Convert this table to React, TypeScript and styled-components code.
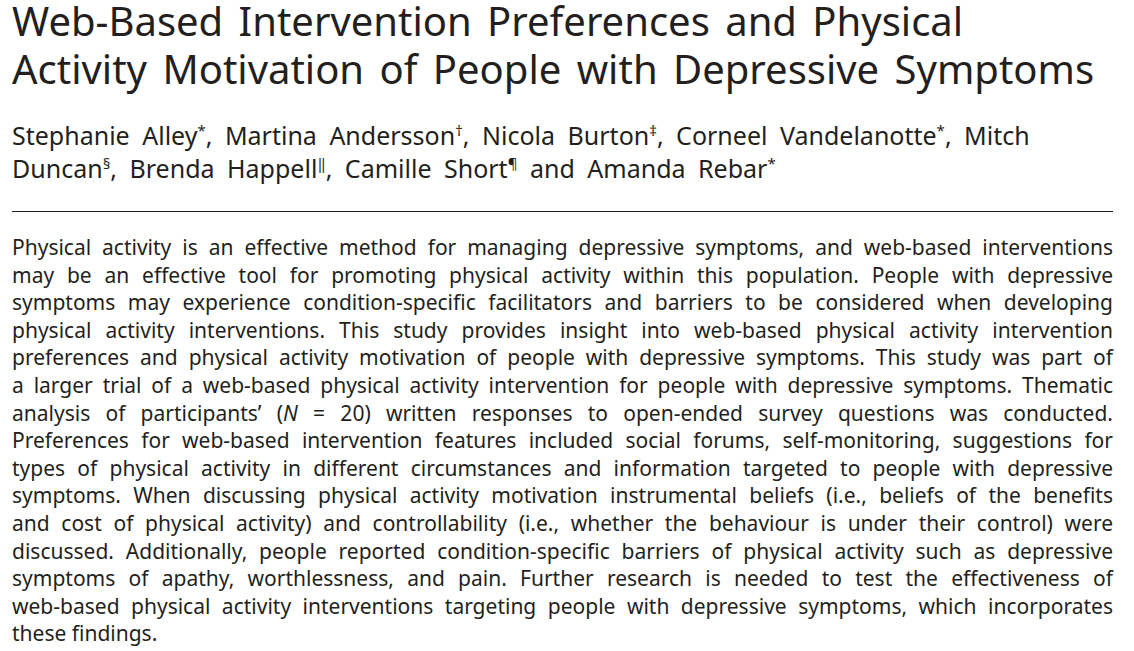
import React from 'react';
import styled, { createGlobalStyle } from 'styled-components';

const GlobalStyle = createGlobalStyle`
  html, body {
    margin: 0;
    padding: 0;
    background: #fff;
  }
  body {
    font-family: "Noto Sans", "Open Sans", sans-serif;
    color: #231f20;
  }
`;

const Page = styled.div`
  width: 1134px;
  padding: 0 21px 0 12px;
  box-sizing: border-box;
`;

const Title = styled.h1`
  margin: -3px 0 0;
  font-size: 40px;
  font-weight: 400;
  line-height: 48px;
  word-spacing: 5px;
  white-space: nowrap;
`;

const Authors = styled.p`
  margin: 26px 0 0;
  font-size: 25px;
  line-height: 33px;
  word-spacing: 6px;
  white-space: nowrap;
`;

const Mark = styled.sup`
  font-size: 15px;
  line-height: 0;
  vertical-align: 9px;
`;

const Rule = styled.hr`
  margin: 26px 0 0;
  border: 0;
  border-top: 1px solid #231f20;
`;

const Abstract = styled.div`
  margin-top: 22px;
  font-size: 21px;
  line-height: 27.6px;
`;

const Line = styled.span<{ $last?: boolean }>`
  display: block;
  text-align: justify;
  text-align-last: ${(p) => (p.$last ? 'left' : 'justify')};
  white-space: nowrap;
`;

const abstractLines: React.ReactNode[] = [
  'Physical activity is an effective method for managing depressive symptoms, and web-based interventions',
  'may be an effective tool for promoting physical activity within this population. People with depressive',
  'symptoms may experience condition-specific facilitators and barriers to be considered when developing',
  'physical activity interventions. This study provides insight into web-based physical activity intervention',
  'preferences and physical activity motivation of people with depressive symptoms. This study was part of',
  'a larger trial of a web-based physical activity intervention for people with depressive symptoms. Thematic',
  <>
    analysis of participants’ (<i>N</i> = 20) written responses to open-ended survey questions was conducted.
  </>,
  'Preferences for web-based intervention features included social forums, self-monitoring, suggestions for',
  'types of physical activity in different circumstances and information targeted to people with depressive',
  'symptoms. When discussing physical activity motivation instrumental beliefs (i.e., beliefs of the benefits',
  'and cost of physical activity) and controllability (i.e., whether the behaviour is under their control) were',
  'discussed. Additionally, people reported condition-specific barriers of physical activity such as depressive',
  'symptoms of apathy, worthlessness, and pain. Further research is needed to test the effectiveness of',
  'web-based physical activity interventions targeting people with depressive symptoms, which incorporates',
  'these findings.',
];

const App: React.FC = () => {
  return (
    <>
      <GlobalStyle />
      <Page>
        <Title>
          Web-Based Intervention Preferences and Physical
          <br />
          Activity Motivation of People with Depressive Symptoms
        </Title>
        <Authors>
          Stephanie Alley<Mark>*</Mark>, Martina Andersson<Mark>†</Mark>, Nicola Burton<Mark>‡</Mark>, Corneel
          Vandelanotte<Mark>*</Mark>, Mitch
          <br />
          Duncan<Mark>§</Mark>, Brenda Happell<Mark>‖</Mark>, Camille Short<Mark>¶</Mark> and Amanda Rebar
          <Mark>*</Mark>
        </Authors>
        <Rule />
        <Abstract>
          {abstractLines.map((line, i) => (
            <Line key={i} $last={i === abstractLines.length - 1}>
              {line}
            </Line>
          ))}
        </Abstract>
      </Page>
    </>
  );
};

export default App;
